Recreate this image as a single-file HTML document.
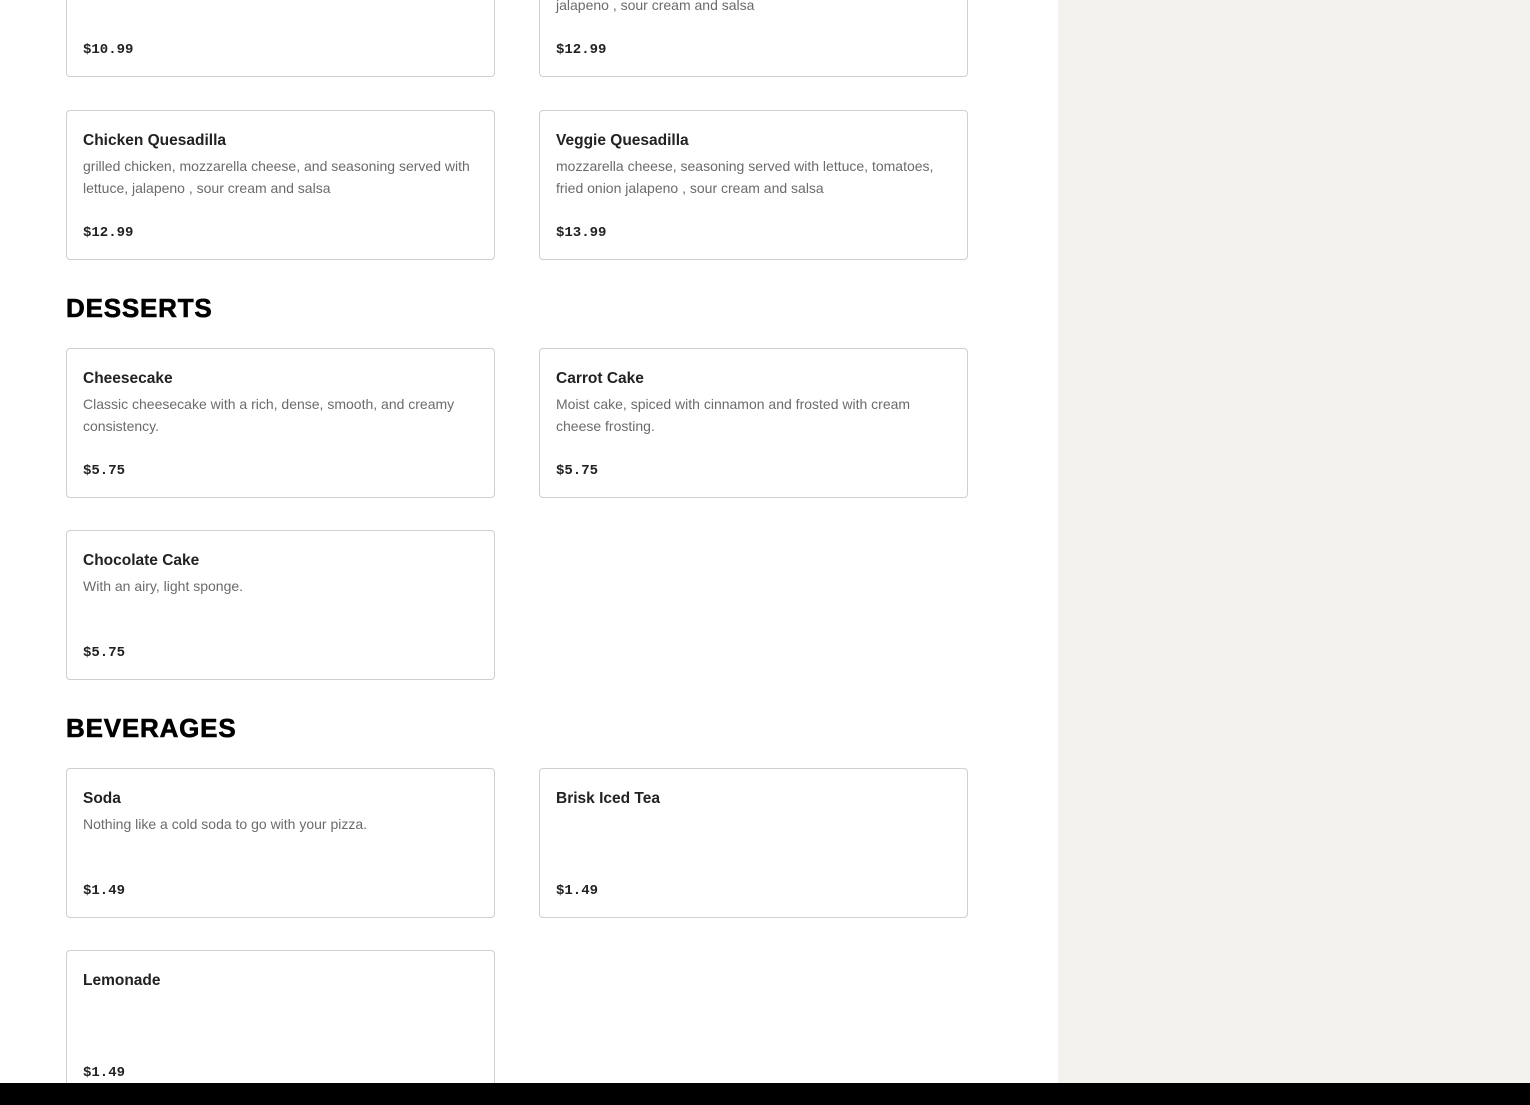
<!DOCTYPE html>
<html><head><meta charset="utf-8"><style>
*{margin:0;padding:0;box-sizing:border-box}
body{width:1530px;height:1105px;overflow:hidden;background:#fff;position:relative;font-family:"Liberation Sans",sans-serif}
.side{position:absolute;left:1058px;top:0;width:472px;height:1105px;background:#f3f2ef}
.bar{position:absolute;left:0;top:1083px;width:1530px;height:22px;background:#000}
.card{position:absolute;width:429px;height:150px;border:1px solid #cfcfcf;border-radius:4px;background:#fff}
.t{position:absolute;left:16px;top:19px;font-size:15.5px;line-height:22px;font-weight:bold;color:#222}
.d{position:absolute;left:16px;top:44px;width:400px;font-size:14px;line-height:22px;color:#6b6b6b}
.p{position:absolute;left:16px;top:111px;font-family:"Liberation Mono",monospace;font-size:14px;line-height:22px;font-weight:bold;color:#222}
h2{position:absolute;left:66px;font-size:26px;line-height:30px;font-weight:900;letter-spacing:0.8px;-webkit-text-stroke:0.6px #000;color:#000}
</style></head><body>
<div class="side"></div>
<div class="card" style="left:66px;top:-73px"><div class="p">$10.99</div></div>
<div class="card" style="left:539px;top:-73px"><div class="d">&nbsp;<br>jalapeno , sour cream and salsa</div><div class="p">$12.99</div></div>
<div class="card" style="left:66px;top:110px"><div class="t">Chicken Quesadilla</div><div class="d">grilled chicken, mozzarella cheese, and seasoning served with lettuce, jalapeno , sour cream and salsa</div><div class="p">$12.99</div></div>
<div class="card" style="left:539px;top:110px"><div class="t">Veggie Quesadilla</div><div class="d">mozzarella cheese, seasoning served with lettuce, tomatoes, fried onion jalapeno , sour cream and salsa</div><div class="p">$13.99</div></div>
<h2 style="top:293px">DESSERTS</h2>
<div class="card" style="left:66px;top:348px"><div class="t">Cheesecake</div><div class="d">Classic cheesecake with a rich, dense, smooth, and creamy consistency.</div><div class="p">$5.75</div></div>
<div class="card" style="left:539px;top:348px"><div class="t">Carrot Cake</div><div class="d">Moist cake, spiced with cinnamon and frosted with cream cheese frosting.</div><div class="p">$5.75</div></div>
<div class="card" style="left:66px;top:530px"><div class="t">Chocolate Cake</div><div class="d">With an airy, light sponge.</div><div class="p">$5.75</div></div>
<h2 style="top:713px">BEVERAGES</h2>
<div class="card" style="left:66px;top:768px"><div class="t">Soda</div><div class="d">Nothing like a cold soda to go with your pizza.</div><div class="p">$1.49</div></div>
<div class="card" style="left:539px;top:768px"><div class="t">Brisk Iced Tea</div><div class="p">$1.49</div></div>
<div class="card" style="left:66px;top:950px"><div class="t">Lemonade</div><div class="p">$1.49</div></div>
<div class="bar"></div>
</body></html>
